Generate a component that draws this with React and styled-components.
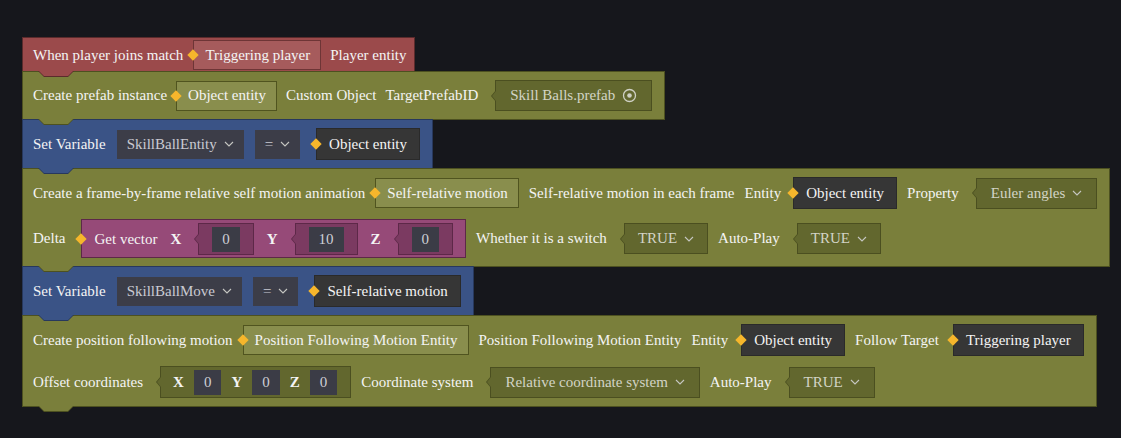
import React from 'react';
import styled, { createGlobalStyle } from 'styled-components';

const serif = `"Liberation Serif", "DejaVu Serif", "Times New Roman", serif`;

const tones = {
  red: { fill: '#9b4a4b', edge: '#5b2b2c', slot: '#a65b5c', slotEdge: '#6e3536' },
  olive: { fill: '#7a7f3b', edge: '#4d5120', slot: '#898e4d', slotEdge: '#50541f', field: '#62672e', fieldEdge: '#4b4f20' },
  blue: { fill: '#3a5386', edge: '#27385d', field: '#3c3d48' },
  plum: { fill: '#964a78', edge: '#5d2848', field: '#7b3a61', fieldEdge: '#5d2848' },
};

const GlobalStyle = createGlobalStyle`
  body {
    margin: 0;
    background: #16171c;
    font-family: ${serif};
    font-size: 15px;
  }
`;

const Canvas = styled.main`
  display: flex;
  flex-direction: column;
  align-items: flex-start;
  padding: 37px 0 0 22px;
  min-height: 100vh;
  box-sizing: border-box;
  font-family: ${serif};
  font-size: 15px;
`;

const Block = styled.section`
  position: relative;
  display: flex;
  flex-direction: column;
  gap: 10px;
  padding: ${(p) => (p.$head ? '2px 8px 1px 10px' : '8px 12px 8px 10px')};
  background: ${(p) => tones[p.$tone].fill};
  border: 1px solid ${(p) => tones[p.$tone].edge};

  & + & {
    margin-top: -1px;
  }

  /* the little connector tab hanging under each block */
  &::before {
    content: '';
    position: absolute;
    top: 100%;
    left: 15px;
    width: 36px;
    height: 6px;
    background: ${(p) => tones[p.$tone].edge};
    clip-path: polygon(0 0, 100% 0, calc(100% - 6px) 100%, 6px 100%);
    z-index: 1;
  }

  &::after {
    content: '';
    position: absolute;
    top: 100%;
    left: 16px;
    width: 34px;
    height: 5px;
    background: ${(p) => tones[p.$tone].fill};
    clip-path: polygon(0 0, 100% 0, calc(100% - 5px) 100%, 5px 100%);
    z-index: 2;
  }
`;

const Row = styled.div`
  display: flex;
  align-items: center;
  gap: ${(p) => p.$gap || 10}px;
`;

const Label = styled.span`
  color: #f4f4f4;
  white-space: nowrap;
  font-weight: ${(p) => (p.$bold ? 700 : 400)};
`;

const Diamond = `
  &::before {
    content: '';
    position: absolute;
    left: -5px;
    top: 50%;
    width: 8px;
    height: 8px;
    margin-top: -4px;
    transform: rotate(45deg);
    background: #f6b62c;
  }
`;

const Socket = styled.div`
  position: relative;
  display: flex;
  align-items: center;
  box-sizing: border-box;
  height: ${(p) => (p.$dark ? 32 : 30)}px;
  padding: ${(p) => (p.$dark ? '0 12px' : '0 10px 0 11px')};
  margin-left: ${(p) => p.$shift || 0}px;
  white-space: nowrap;
  color: #f4f4f4;
  background: ${(p) => (p.$dark ? '#363636' : tones[p.$tone].slot)};
  border: 1px solid ${(p) => (p.$dark ? '#2a2a2a' : tones[p.$tone].slotEdge)};
  ${Diamond}
`;

const Field = styled.div`
  position: relative;
  display: flex;
  align-items: center;
  gap: ${(p) => p.$gap || 7}px;
  box-sizing: border-box;
  height: ${(p) => p.$h || 31}px;
  padding: ${(p) => p.$pad || '0 14px'};
  margin-left: ${(p) => p.$ml ?? 7}px;
  white-space: nowrap;
  color: #d3d4c6;
  background: ${(p) => tones[p.$tone].field};
  border: 1px solid ${(p) => tones[p.$tone].fieldEdge};

  &::before {
    content: '';
    position: absolute;
    right: 100%;
    top: 50%;
    margin-top: -6px;
    border-top: 6px solid transparent;
    border-bottom: 6px solid transparent;
    border-right: 5px solid ${(p) => tones[p.$tone].fieldEdge};
  }

  &::after {
    content: '';
    position: absolute;
    right: 100%;
    top: 50%;
    margin-top: -5px;
    border-top: 5px solid transparent;
    border-bottom: 5px solid transparent;
    border-right: 4px solid ${(p) => tones[p.$tone].field};
  }
`;

const Picker = styled.div`
  display: flex;
  align-items: center;
  gap: 7px;
  height: 29px;
  padding: 0 10px;
  white-space: nowrap;
  color: #c9cad2;
  background: ${tones.blue.field};
`;

const Vector = styled.div`
  position: relative;
  display: flex;
  align-items: center;
  gap: 13px;
  margin-left: 6px;
  padding: 3px 12px 2px 12px;
  background: ${tones.plum.fill};
  border: 1px solid ${tones.plum.edge};
  ${Diamond}
`;

const NumBox = styled.span`
  display: flex;
  align-items: center;
  justify-content: center;
  height: 25px;
  padding: 0 10px;
  color: #cfd0d6;
  background: #3b3c46;
`;

const Chevron = () => (
  <svg width="10" height="6" viewBox="0 0 10 6" fill="none">
    <polyline points="1,1 5,5 9,1" stroke="#c6c7c2" strokeWidth="1.1" />
  </svg>
);

const Target = () => (
  <svg width="15" height="15" viewBox="0 0 15 15" fill="none">
    <circle cx="7.5" cy="7.5" r="6" stroke="#cfd0c4" strokeWidth="1.3" />
    <circle cx="7.5" cy="7.5" r="2.3" fill="#cfd0c4" />
  </svg>
);

const Drop = ({ pad, children }) => (
  <Field $tone="olive" $pad={pad}>
    {children}
    <Chevron />
  </Field>
);

const VecInput = ({ value }) => (
  <Field $tone="plum" $h={32} $pad="0 13px" $ml={4}>
    <NumBox>{value}</NumBox>
  </Field>
);

const App = () => (
  <>
    <GlobalStyle />
    <Canvas>
      <Block $tone="red" $head>
        <Row $gap={9}>
          <Label>When player joins match</Label>
          <Socket $tone="red" $shift={1}>Triggering player</Socket>
          <Label>Player entity</Label>
        </Row>
      </Block>

      <Block $tone="olive">
        <Row $gap={9}>
          <Label>Create prefab instance</Label>
          <Socket $tone="olive">Object entity</Socket>
          <Label>Custom Object</Label>
          <Label>TargetPrefabID</Label>
          <Field $tone="olive" $ml={8}>
            Skill Balls.prefab
            <Target />
          </Field>
        </Row>
      </Block>

      <Block $tone="blue">
        <Row $gap={11}>
          <Label>Set Variable</Label>
          <Picker>
            SkillBallEntity
            <Chevron />
          </Picker>
          <Picker>
            =
            <Chevron />
          </Picker>
          <Socket $dark $shift={5}>Object entity</Socket>
        </Row>
      </Block>

      <Block $tone="olive">
        <Row $gap={10}>
          <Label>Create a frame-by-frame relative self motion animation</Label>
          <Socket $tone="olive">Self-relative motion</Socket>
          <Label>Self-relative motion in each frame</Label>
          <Label>Entity</Label>
          <Socket $dark $shift={2}>Object entity</Socket>
          <Label>Property</Label>
          <Drop>Euler angles</Drop>
        </Row>
        <Row $gap={10}>
          <Label>Delta</Label>
          <Vector>
            <Label>Get vector</Label>
            <Label $bold>X</Label>
            <VecInput value="0" />
            <Label $bold>Y</Label>
            <VecInput value="10" />
            <Label $bold>Z</Label>
            <VecInput value="0" />
          </Vector>
          <Label>Whether it is a switch</Label>
          <Drop pad="0 13px">TRUE</Drop>
          <Label>Auto-Play</Label>
          <Drop pad="0 13px">TRUE</Drop>
        </Row>
      </Block>

      <Block $tone="blue">
        <Row $gap={11}>
          <Label>Set Variable</Label>
          <Picker>
            SkillBallMove
            <Chevron />
          </Picker>
          <Picker>
            =
            <Chevron />
          </Picker>
          <Socket $dark $shift={5}>Self-relative motion</Socket>
        </Row>
      </Block>

      <Block $tone="olive">
        <Row $gap={10}>
          <Label>Create position following motion</Label>
          <Socket $tone="olive">Position Following Motion Entity</Socket>
          <Label>Position Following Motion Entity</Label>
          <Label>Entity</Label>
          <Socket $dark $shift={3}>Object entity</Socket>
          <Label>Follow Target</Label>
          <Socket $dark $shift={4}>Triggering player</Socket>
        </Row>
        <Row $gap={10}>
          <Label>Offset coordinates</Label>
          <Field $tone="olive" $gap={10} $h={32} $pad="0 13px 0 12px">
            <Label $bold>X</Label>
            <NumBox>0</NumBox>
            <Label $bold>Y</Label>
            <NumBox>0</NumBox>
            <Label $bold>Z</Label>
            <NumBox>0</NumBox>
          </Field>
          <Label>Coordinate system</Label>
          <Drop>Relative coordinate system</Drop>
          <Label>Auto-Play</Label>
          <Drop>TRUE</Drop>
        </Row>
      </Block>
    </Canvas>
  </>
);

export default App;
